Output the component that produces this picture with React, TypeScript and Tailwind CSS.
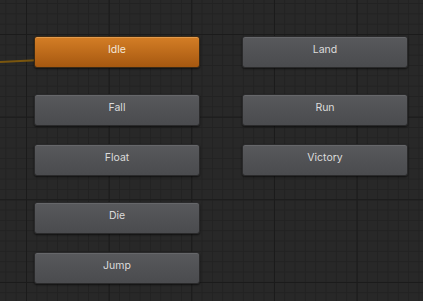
import React from "react";

const base =
  "w-[166px] h-[32px] shrink-0 rounded-[3px] border flex justify-center pt-[5px] text-[10.5px]";
const gray =
  "border-[#2a2a2b] bg-[linear-gradient(to_bottom,#58595c,#4a4b4e)] shadow-[inset_0_1px_0_#66676a,0_1px_2px_rgba(0,0,0,0.6)] text-[#dcdcdc]";
const orange =
  "border-[#3a2a16] bg-[linear-gradient(to_bottom,#d47e26,#a65810)] shadow-[inset_0_1px_0_#e29a4c,0_1px_2px_rgba(0,0,0,0.6)] text-[#f3e6da]";

function Node({ label, active, className = "" }: { label: string; active?: boolean; className?: string }) {
  return <div className={`${base} ${active ? orange : gray} ${className}`}>{label}</div>;
}

export default function App() {
  return (
    <div className="relative w-[423px] h-[301px] overflow-hidden flex gap-[42px] pl-[34px] pt-[36px] font-['Inter','Noto_Sans',sans-serif] bg-[#282828] bg-[linear-gradient(to_right,#1b1b1b_1px,transparent_1px),linear-gradient(to_bottom,#1b1b1b_1px,transparent_1px),linear-gradient(to_right,#222222_1px,transparent_1px),linear-gradient(to_bottom,#222222_1px,transparent_1px)] bg-[length:82.67px_82.67px,82.67px_82.67px,10.333px_10.333px,10.333px_10.333px] bg-[position:26px_34px,26px_34px,26px_34px,26px_34px]">
      <svg className="absolute left-0 top-0" width="40" height="70">
        <line x1="0" y1="62" x2="36" y2="60.3" stroke="#7a560e" strokeWidth="2" />
      </svg>
      <div className="relative flex flex-col">
        <Node label="Idle" active />
        <Node label="Fall" className="mt-[26px]" />
        <Node label="Float" className="mt-[18px]" />
        <Node label="Die" className="mt-[26px]" />
        <Node label="Jump" className="mt-[18px]" />
      </div>
      <div className="flex flex-col">
        <Node label="Land" />
        <Node label="Run" className="mt-[26px]" />
        <Node label="Victory" className="mt-[18px]" />
      </div>
    </div>
  );
}
